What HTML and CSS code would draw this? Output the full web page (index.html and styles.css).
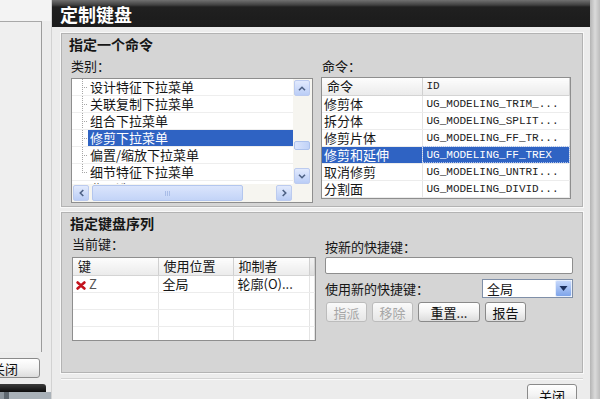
FILE: index.html
```html
<!DOCTYPE html>
<html lang="zh-CN">
<head>
    <meta charset="UTF-8">
    <meta name="viewport" content="width=device-width, initial-scale=1.0">
    <title>定制键盘</title>
    <link rel="stylesheet" href="styles.css">
</head>
<body>
<div class="desk">
    <!-- window behind the dialog -->
    <div class="behind">
        <div class="behind-top"></div>
        <div class="behind-panel"></div>
        <div class="behind-foot"><button class="btn btn-behind">关闭</button></div>
        <div class="behind-bar"></div>
        <div class="behind-rest"></div>
    </div>

    <div class="dialog">
        <div class="dialog-title">定制键盘</div>
        <div class="dialog-body">

            <div class="group group-cmd">
                <div class="group-title">指定一个命令</div>
                <div class="cmd-cols">
                    <div class="col-cat">
                        <div class="field-label">类别：</div>
                        <div class="listbox">
                            <div class="tree">
                                <div class="tree-item"><span class="twig"></span><span class="tree-text">设计特征下拉菜单</span></div>
                                <div class="tree-item"><span class="twig"></span><span class="tree-text">关联复制下拉菜单</span></div>
                                <div class="tree-item"><span class="twig"></span><span class="tree-text">组合下拉菜单</span></div>
                                <div class="tree-item sel"><span class="twig"></span><span class="tree-text">修剪下拉菜单</span></div>
                                <div class="tree-item"><span class="twig"></span><span class="tree-text">偏置/缩放下拉菜单</span></div>
                                <div class="tree-item"><span class="twig twig-end"></span><span class="tree-text">细节特征下拉菜单</span></div>
                                <div class="tree-item"><span class="twig twig-box"></span><span class="tree-text">曲面选项</span></div>
                            </div>
                            <div class="vscroll">
                                <div class="sb-btn">
                                    <svg width="8" height="5" viewBox="0 0 8 5"><path d="M1 4.3 L4 1.3 L7 4.3" fill="none" stroke="#4d6185" stroke-width="1.6"/></svg>
                                </div>
                                <div class="sb-gap-a"></div>
                                <div class="sb-thumb-v"></div>
                                <div class="sb-gap-b"></div>
                                <div class="sb-btn">
                                    <svg width="8" height="5" viewBox="0 0 8 5"><path d="M1 0.7 L4 3.7 L7 0.7" fill="none" stroke="#4d6185" stroke-width="1.6"/></svg>
                                </div>
                            </div>
                            <div class="hscroll">
                                <div class="sb-btn">
                                    <svg width="5" height="8" viewBox="0 0 5 8"><path d="M4.3 1 L1.3 4 L4.3 7" fill="none" stroke="#4d6185" stroke-width="1.6"/></svg>
                                </div>
                                <div class="sb-thumb-h"></div>
                                <div class="sb-fill"></div>
                                <div class="sb-btn">
                                    <svg width="5" height="8" viewBox="0 0 5 8"><path d="M0.7 1 L3.7 4 L0.7 7" fill="none" stroke="#4d6185" stroke-width="1.6"/></svg>
                                </div>
                            </div>
                            <div class="sb-corner"></div>
                        </div>
                    </div>

                    <div class="col-list">
                        <div class="field-label field-label-r">命令：</div>
                        <div class="table-box cmd-box">
                            <table class="grid">
                                <colgroup><col class="c-name"><col></colgroup>
                                <thead>
                                    <tr><th>命令</th><th class="mono">ID</th></tr>
                                </thead>
                                <tbody>
                                    <tr><td>修剪体</td><td class="mono">UG_MODELING_TRIM_...</td></tr>
                                    <tr><td>拆分体</td><td class="mono">UG_MODELING_SPLIT...</td></tr>
                                    <tr><td>修剪片体</td><td class="mono">UG_MODELING_FF_TR...</td></tr>
                                    <tr class="sel"><td>修剪和延伸</td><td class="mono focus">UG_MODELING_FF_TREX</td></tr>
                                    <tr><td>取消修剪</td><td class="mono">UG_MODELING_UNTRI...</td></tr>
                                    <tr><td>分割面</td><td class="mono">UG_MODELING_DIVID...</td></tr>
                                </tbody>
                            </table>
                        </div>
                    </div>
                </div>
            </div>

            <div class="group group-keys">
                <div class="group-title">指定键盘序列</div>
                <div class="keys-cols">
                    <div class="col-current">
                        <div class="field-label field-label-k">当前键：</div>
                        <div class="table-box keys-box">
                            <table class="grid">
                                <colgroup><col class="c-key"><col class="c-where"><col class="c-by"><col></colgroup>
                                <thead>
                                    <tr><th>键</th><th>使用位置</th><th>抑制者</th><th class="th-rest"></th></tr>
                                </thead>
                                <tbody>
                                    <tr>
                                        <td class="key-cell"><svg class="x-icon" width="10" height="9" viewBox="0 0 10 9"><path d="M1.6 1.5 L8.4 7.5 M8.4 1.5 L1.6 7.5" stroke="#c3121c" stroke-width="2.6" stroke-linecap="round"/></svg><span class="key-name">Z</span></td>
                                        <td>全局</td>
                                        <td>轮廓(O)...</td>
                                        <td></td>
                                    </tr>
                                    <tr><td></td><td></td><td></td><td></td></tr>
                                    <tr><td></td><td></td><td></td><td></td></tr>
                                    <tr><td></td><td></td><td></td><td></td></tr>
                                </tbody>
                            </table>
                        </div>
                    </div>

                    <div class="col-new">
                        <div class="field-label field-label-n">按新的快捷键：</div>
                        <div class="textbox"></div>
                        <div class="new-row">
                            <span>使用新的快捷键：</span>
                            <div class="combo">
                                <span class="combo-text">全局</span>
                                <span class="combo-arrow">
                                    <svg width="9" height="5" viewBox="0 0 9 5"><path d="M0.5 0 L8.5 0 L4.5 5 Z" fill="#1c2f5c"/></svg>
                                </span>
                            </div>
                        </div>
                        <div class="btn-row">
                            <button class="btn btn-s" disabled>指派</button>
                            <button class="btn btn-s" disabled>移除</button>
                            <button class="btn btn-m">重置...</button>
                            <button class="btn btn-s">报告</button>
                        </div>
                    </div>
                </div>
            </div>

            <div class="dialog-foot">
                <button class="btn btn-close">关闭</button>
            </div>
        </div>
    </div>

    <div class="edge"></div>
</div>
</body>
</html>
```

FILE: styles.css
```css
* {
    box-sizing: border-box;
}
html, body {
    margin: 0;
    padding: 0;
}
body {
    width: 600px;
    height: 399px;
    overflow: hidden;
    font-family: "Noto Sans CJK SC", "Noto Sans", sans-serif;
    font-size: 13px;
    color: #161616;
    background: #c4c4c4;
}
.desk {
    display: flex;
    height: 399px;
}

/* window behind */
.behind {
    width: 52px;
    display: flex;
    flex-direction: column;
    background: #ececec;
    border-right: 1px solid #d2d2d2;
}
.behind-top {
    height: 21px;
    background: #f3f3f3;
}
.behind-panel {
    width: 42px;
    height: 331px;
    background: #efefef;
    border-top: 1px solid #a8a8a8;
    border-right: 1px solid #9c9c9c;
}
.behind-foot {
    height: 32px;
    padding-top: 6px;
    overflow: hidden;
}
.btn-behind {
    width: 70px;
    margin-left: -30px;
}
.behind-bar {
    width: 46px;
    height: 8px;
    background: linear-gradient(#3c3c3c, #0c0c0c);
    border-radius: 0 3px 0 0;
}
.behind-rest {
    flex: 1;
    background: linear-gradient(to right, #8d969e 0 4px, #5f6870 4px 9px, #a9b1b8 9px);
}

/* buttons */
.btn {
    height: 20px;
    padding: 0;
    font-family: inherit;
    font-size: 13px;
    line-height: 17px;
    color: #111;
    background: linear-gradient(#ffffff, #f3f3f3 50%, #dcdcdc);
    border: 1px solid #8a8a8a;
    border-radius: 3px;
}
.btn:disabled {
    color: #a6a6a6;
    border-color: #bcbcbc;
    background: linear-gradient(#fafafa, #e6e6e6);
}

/* dialog */
.dialog {
    width: 538px;
    display: flex;
    flex-direction: column;
    background: #ececec;
}
.dialog-title {
    height: 27px;
    padding-left: 8px;
    font-size: 18px;
    font-weight: bold;
    line-height: 28px;
    color: #fff;
    background: linear-gradient(#707070, #404040 5px, #202020 7px, #1b1b1b);
}
.dialog-body {
    flex: 1;
    padding: 6px 7px 0 9px;
}
.group {
    background: #d5d5d5;
    border: 1px solid #b3b3b3;
    box-shadow: 0 0 0 1px #f8f8f8;
}
.group-title {
    margin-left: -2px;
    font-size: 14px;
    font-weight: bold;
    line-height: 20px;
}
.field-label {
    height: 24px;
    padding-top: 2px;
    line-height: 20px;
}
.field-label-r {
    height: 23px;
    padding-left: 1px;
}

/* command group */
.group-cmd {
    height: 174px;
    padding: 0 11px 0 9px;
}
.cmd-cols {
    display: flex;
    gap: 8px;
}
.col-cat {
    width: 242px;
}
.col-list {
    width: 250px;
}

.listbox {
    height: 125px;
    display: grid;
    grid-template-columns: 221px 19px;
    grid-template-rows: 105px 18px;
    background: #fff;
    border: 1px solid #8e8e8e;
}
.tree {
    overflow: hidden;
}
.tree-item {
    display: flex;
    height: 17px;
    line-height: 16px;
    border-bottom: 1px solid #eeeeee;
    white-space: nowrap;
}
.twig {
    width: 16px;
    flex: none;
    background:
        repeating-linear-gradient(to bottom, #a6a6a6 0 1px, transparent 1px 2px) 10px 0 / 1px 100% no-repeat,
        repeating-linear-gradient(to right, #a6a6a6 0 1px, transparent 1px 2px) 10px 8px / 6px 1px no-repeat;
}
.twig-end {
    background:
        repeating-linear-gradient(to bottom, #a6a6a6 0 1px, transparent 1px 2px) 10px 0 / 1px 9px no-repeat,
        repeating-linear-gradient(to right, #a6a6a6 0 1px, transparent 1px 2px) 10px 8px / 6px 1px no-repeat;
}
.twig-box {
    background: linear-gradient(#7a7a7a, #7a7a7a) 1px 3px / 9px 1px no-repeat;
}
.tree-text {
    flex: 1;
    padding-left: 2px;
}
.tree-item.sel .tree-text {
    color: #fff;
    background: #2f63c3;
}

.vscroll {
    display: flex;
    flex-direction: column;
    padding: 1px 2px 0 1px;
    background: #f6f5f0;
}
.sb-btn {
    width: 16px;
    height: 16px;
    flex: none;
    display: flex;
    align-items: center;
    justify-content: center;
    background: linear-gradient(#e2eafd, #bacdf6);
    border: 1px solid #bccbef;
    border-radius: 2px;
}
.sb-gap-a {
    height: 45px;
}
.sb-thumb-v {
    height: 9px;
    background: linear-gradient(to right, #dbe5fc, #c0d2f7);
    border: 1px solid #adc2ec;
    border-radius: 2px;
}
.sb-gap-b {
    height: 18px;
}
.hscroll {
    display: flex;
    align-items: center;
    padding: 0 1px;
    background: #f6f5f0;
}
.sb-thumb-h {
    width: 151px;
    height: 16px;
    margin-left: 3px;
    background:
        repeating-linear-gradient(to right, #a9bde8 0 1px, transparent 1px 2px) center / 5px 5px no-repeat,
        linear-gradient(#dbe5fc, #c3d4f7);
    border: 1px solid #b3c6ee;
    border-radius: 2px;
}
.sb-fill {
    flex: 1;
}
.sb-corner {
    background: #f6f5f0;
}

/* tables */
.table-box {
    background: #fff;
    border: 1px solid #8e8e8e;
    overflow: hidden;
}
.cmd-box {
    height: 122px;
}
.grid {
    width: 100%;
    border-collapse: collapse;
    table-layout: fixed;
}
.grid th, .grid td {
    height: 17px;
    padding: 0 0 0 2px;
    font-weight: normal;
    text-align: left;
    line-height: 16px;
    white-space: nowrap;
    overflow: hidden;
    border-right: 1px solid #e4e4e4;
    border-bottom: 1px solid #ececec;
}
.grid th {
    padding-left: 5px;
    background: linear-gradient(#fdfdfd, #ebebeb);
    border-right: 1px solid #d0d0d0;
    border-bottom: 1px solid #d4d4d4;
}
.grid .mono {
    padding-left: 4px;
    font-family: "Liberation Mono", monospace;
    font-size: 11px;
    color: #222;
}
.grid tr.sel td {
    color: #fff;
    background: #2f63c3;
}
.grid td.focus {
    outline: 1px dotted #a9c0ee;
    outline-offset: -1px;
}
.c-name {
    width: 100px;
}

/* key group */
.group-keys {
    height: 161px;
    margin-top: 5px;
    padding: 0 9px 0 10px;
}
.keys-cols {
    display: flex;
    gap: 9px;
}
.col-current {
    width: 244px;
}
.col-new {
    width: 248px;
}
.field-label-k {
    padding-top: 1px;
}
.keys-box {
    height: 84px;
}
.c-key {
    width: 85px;
}
.c-where {
    width: 75px;
}
.c-by {
    width: 76px;
}
.keys-box .grid th {
    padding-left: 5px;
}
.keys-box .grid td {
    padding-left: 4px;
}
.keys-box .grid th.th-rest {
    background: linear-gradient(#f2f2f2, #dedede);
}
.grid td.key-cell {
    padding-left: 3px;
}
.x-icon {
    vertical-align: -1px;
}
.key-name {
    margin-left: 3px;
    color: #555;
}

.field-label-n {
    height: 24px;
    padding-top: 4px;
}
.textbox {
    height: 17px;
    background: #fff;
    border: 1px solid #8e8e8e;
    border-radius: 2px;
}
.new-row {
    display: flex;
    align-items: center;
    justify-content: space-between;
    height: 19px;
    margin-top: 5px;
}
.combo {
    width: 91px;
    height: 19px;
    display: flex;
    background: #fff;
    border: 1px solid #7f8fa8;
}
.combo-text {
    flex: 1;
    padding-left: 4px;
    line-height: 17px;
}
.combo-arrow {
    width: 17px;
    display: flex;
    align-items: center;
    justify-content: center;
    background: linear-gradient(#c6d8fb, #7ea4ea);
    border: 1px solid #e6eefc;
    border-radius: 2px;
}
.btn-row {
    display: flex;
    gap: 5px;
    margin-top: 4px;
    padding-left: 1px;
}
.btn-s {
    width: 41px;
}
.btn-m {
    width: 62px;
}

.dialog-foot {
    display: flex;
    justify-content: flex-end;
    margin-top: 5px;
    padding: 5px 6px 0 0;
    border-top: 1px solid #d4d4d4;
    box-shadow: inset 0 1px 0 #fafafa;
}
.btn-close {
    width: 50px;
    height: 22px;
}

.edge {
    flex: 1;
    background: linear-gradient(to right, #b4b4b4, #dadada 50%, #bcbcbc);
}
```
